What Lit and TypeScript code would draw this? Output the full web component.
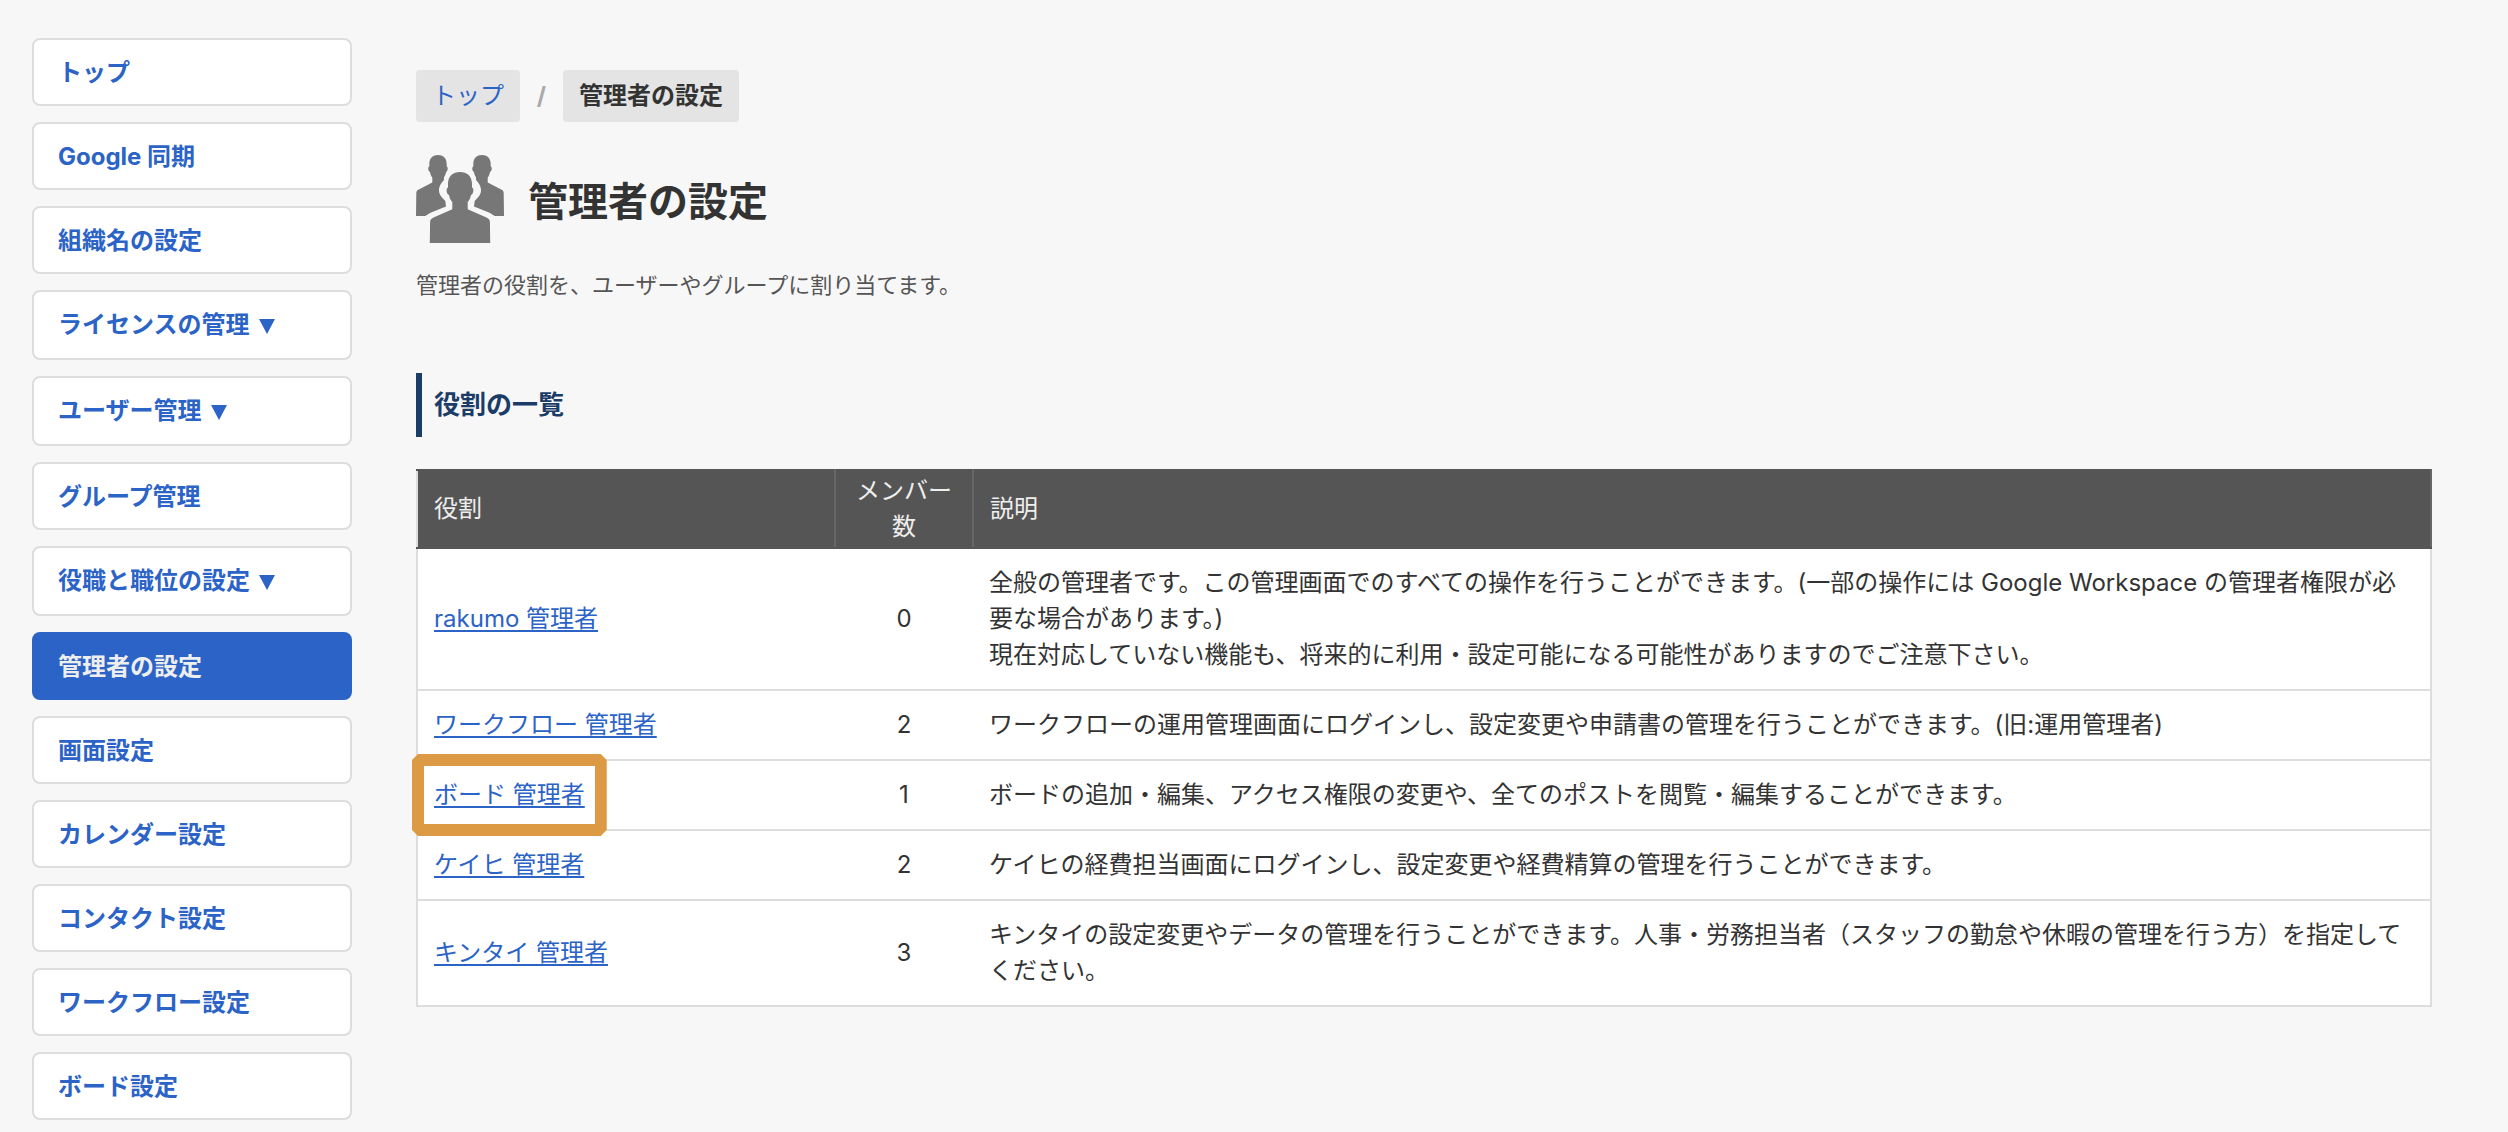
import { LitElement, html, css, svg } from "lit";
import { customElement } from "lit/decorators.js";
import { classMap } from "lit/directives/class-map.js";

interface NavItem {
  label: string;
  submenu?: boolean;
  current?: boolean;
}

interface Role {
  name: string;
  members: number;
  description: string[];
  highlighted?: boolean;
}

const NAV: NavItem[] = [
  { label: "トップ" },
  { label: "Google 同期" },
  { label: "組織名の設定" },
  { label: "ライセンスの管理", submenu: true },
  { label: "ユーザー管理", submenu: true },
  { label: "グループ管理" },
  { label: "役職と職位の設定", submenu: true },
  { label: "管理者の設定", current: true },
  { label: "画面設定" },
  { label: "カレンダー設定" },
  { label: "コンタクト設定" },
  { label: "ワークフロー設定" },
  { label: "ボード設定" },
];

const ROLES: Role[] = [
  {
    name: "rakumo 管理者",
    members: 0,
    description: [
      "全般の管理者です。この管理画面でのすべての操作を行うことができます。(一部の操作には Google Workspace の管理者権限が必要な場合があります。)",
      "現在対応していない機能も、将来的に利用・設定可能になる可能性がありますのでご注意下さい。",
    ],
  },
  {
    name: "ワークフロー 管理者",
    members: 2,
    description: [
      "ワークフローの運用管理画面にログインし、設定変更や申請書の管理を行うことができます。(旧:運用管理者)",
    ],
  },
  {
    name: "ボード 管理者",
    members: 1,
    description: [
      "ボードの追加・編集、アクセス権限の変更や、全てのポストを閲覧・編集することができます。",
    ],
    highlighted: true,
  },
  {
    name: "ケイヒ 管理者",
    members: 2,
    description: [
      "ケイヒの経費担当画面にログインし、設定変更や経費精算の管理を行うことができます。",
    ],
  },
  {
    name: "キンタイ 管理者",
    members: 3,
    description: [
      "キンタイの設定変更やデータの管理を行うことができます。人事・労務担当者（スタッフの勤怠や休暇の管理を行う方）を指定してください。",
    ],
  },
];

@customElement("side-nav")
export class SideNav extends LitElement {
  static styles = css`
    :host {
      display: block;
    }
    .list {
      display: flex;
      flex-direction: column;
      gap: 16px;
      margin: 0;
      padding: 0;
      list-style: none;
    }
    .item {
      display: block;
      box-sizing: border-box;
      width: 100%;
      padding: 15px 24px 13px;
      border: 2px solid #ddd;
      border-radius: 8px;
      background: #fff;
      color: #2b63c6;
      font: inherit;
      font-optical-sizing: none;
      font-weight: 700;
      line-height: 36px;
      text-align: left;
      text-decoration: none;
      cursor: pointer;
    }
    .submenu {
      padding-bottom: 15px;
    }
    .current {
      border-color: #2b63c6;
      background: #2b63c6;
      color: #eee;
    }
    .arrow {
      display: inline-block;
      width: 16px;
      height: 15px;
      margin-left: 9px;
      vertical-align: -1px;
      fill: currentColor;
    }
  `;

  render() {
    return html`
      <nav>
        <ul class="list">
          ${NAV.map(
            (item) => html`<li>
              ${item.submenu
                ? html`<button class="item submenu" type="button" aria-expanded="false">${item.label}<svg class="arrow" viewBox="0 0 16 15" aria-hidden="true"><path d="M0 0h16L8 15z" /></svg></button>`
                : html`<a
                    class=${classMap({ item: true, current: !!item.current })}
                    href="#"
                    >${item.label}</a
                  >`}
            </li>`
          )}
        </ul>
      </nav>
    `;
  }
}

@customElement("role-table")
export class RoleTable extends LitElement {
  static styles = css`
    :host {
      display: block;
    }
    .table {
      width: 100%;
      border-collapse: collapse;
      table-layout: fixed;
      line-height: 36px;
    }
    .col-role {
      width: 418px;
    }
    .col-members {
      width: 138px;
    }
    .head {
      padding: 2px 16px;
      border: 2px solid #555;
      border-left-color: #666;
      border-right-color: #666;
      background: #555;
      color: #eee;
      font-weight: 400;
      text-align: left;
    }
    .head:first-child {
      border-left-color: #ddd;
    }
    .cell {
      padding: 16px;
      border-bottom: 2px solid #ddd;
      background: #fff;
      font-weight: 400;
      text-align: left;
    }
    .cell:first-child {
      border-left: 2px solid #ddd;
    }
    .cell:last-child {
      border-right: 2px solid #ddd;
    }
    .members {
      text-align: center;
    }
    .line {
      margin: 0;
    }
    .target {
      display: inline-block;
      position: relative;
      vertical-align: top;
    }
    .link {
      color: #2b63c6;
      text-decoration: underline;
      text-decoration-thickness: 2px;
      text-underline-offset: 3px;
      text-decoration-skip-ink: none;
    }
    .frame {
      position: absolute;
      inset: -23px -22px;
      border: 12px solid #dc9a44;
      clip-path: polygon(
        6px 0,
        calc(100% - 6px) 0,
        100% 6px,
        100% calc(100% - 6px),
        calc(100% - 6px) 100%,
        6px 100%,
        0 calc(100% - 6px),
        0 6px
      );
      pointer-events: none;
    }
  `;

  render() {
    return html`
      <table class="table">
        <colgroup>
          <col class="col-role" />
          <col class="col-members" />
          <col />
        </colgroup>
        <thead>
          <tr>
            <th class="head" scope="col">役割</th>
            <th class="head members" scope="col">メンバー数</th>
            <th class="head" scope="col">説明</th>
          </tr>
        </thead>
        <tbody>
          ${ROLES.map(
            (role) => html`<tr>
              <th class="cell" scope="row">
                <span class="target"
                  ><a class="link" href="#">${role.name}</a>${role.highlighted
                    ? html`<span class="frame"></span>`
                    : null}</span
                >
              </th>
              <td class="cell members">${role.members}</td>
              <td class="cell">
                ${role.description.map((text) => html`<p class="line">${text}</p>`)}
              </td>
            </tr>`
          )}
        </tbody>
      </table>
    `;
  }
}

const backFigure = svg`<path d="M13.3 9C13.3 3 17 0 22 0s8.700 3 8.700 9v2.600c1.600.4 1.200 5-.6 5.400-.5 2.500-1.200 4-2.100 5.200v2.600C25.500 28 23 31 23 35.500c0 4.500 3.500 7.500 6.300 10.500l.7 5.500-15.500 6.300L9.300 61H0l.3-22.500c0-2 .7-3 2-3.700L16.300 27.500v-4.800c-1.100-1.500-1.900-3.200-2.300-5.700-2-.4-2.400-5-.7-5.400z"/>`;

@customElement("app-root")
export class AppRoot extends LitElement {
  static styles = css`
    :host {
      display: block;
      min-height: 100vh;
      background: #f7f7f7;
      color: #333;
      font-family: Inter, "Noto Sans CJK JP", sans-serif;
      font-size: 24px;
      font-optical-sizing: none;
      line-height: 36px;
    }
    .page {
      display: flex;
      align-items: flex-start;
      gap: 64px;
      padding: 38px 76px 12px 32px;
    }
    .side {
      flex: 0 0 320px;
    }
    .main {
      flex: 1;
      min-width: 0;
      padding-top: 32px;
    }
    .crumbs {
      display: flex;
      align-items: center;
      gap: 16px;
      margin: 0;
      padding: 0;
      list-style: none;
    }
    .crumb {
      padding: 8px 16px;
      border-radius: 4px;
      background: #e4e4e4;
    }
    .crumb-link {
      color: #2b63c6;
      text-decoration: none;
    }
    .here {
      font-weight: 700;
    }
    .slash {
      width: 11px;
      color: #aaa;
      font-weight: 700;
      text-align: center;
    }
    .heading {
      display: flex;
      align-items: center;
      gap: 24px;
      margin-top: 33px;
    }
    .icon {
      width: 88px;
      height: 88px;
      fill: #777;
    }
    .title {
      margin: 0;
      padding-top: 6px;
      font-size: 40px;
      line-height: 60px;
    }
    .lead {
      margin: 24px 0 0;
      color: #555;
      font-size: 22px;
    }
    .section {
      margin: 70px 0 32px;
      padding: 14px 12px;
      border-left: 6px solid #1a3c66;
      color: #1a3c66;
      font-size: 26px;
      line-height: 36px;
    }
  `;

  render() {
    return html`
      <div class="page">
        <side-nav class="side"></side-nav>
        <main class="main">
          <nav>
            <ol class="crumbs">
              <li class="crumb"><a class="crumb-link" href="#">トップ</a></li>
              <li class="slash" aria-hidden="true">/</li>
              <li class="crumb here" aria-current="page">管理者の設定</li>
            </ol>
          </nav>
          <header class="heading">
            <svg class="icon" viewBox="0 0 88 88" aria-hidden="true">
              ${backFigure}
              <g transform="translate(88 0) scale(-1 1)">${backFigure}</g>
              <path
                d="M32 29c0-8 5-12 12-12s12 4 12 12v3.500c2.300.3 1.500 7-1 7.500-.6 3-1.500 5-3.300 7v7.300L70.500 62.500c2.500 1.200 3.300 2.500 3.400 4.500L74.200 88H13.800l.3-21c.1-2 .9-3.300 3.400-4.500L36.300 54.300V47c-1.800-2-2.700-4-3.300-7-2.500-.5-3.300-7.200-1-7.500z"
              />
            </svg>
            <h1 class="title">管理者の設定</h1>
          </header>
          <p class="lead">管理者の役割を、ユーザーやグループに割り当てます。</p>
          <h2 class="section">役割の一覧</h2>
          <role-table></role-table>
        </main>
      </div>
    `;
  }
}
